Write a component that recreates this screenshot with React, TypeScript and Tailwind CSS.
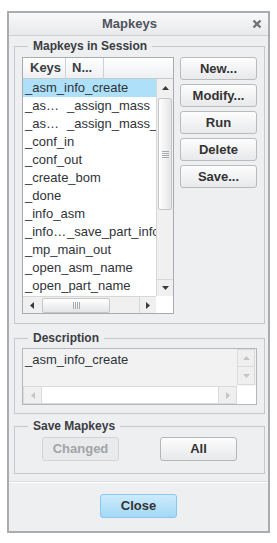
import type { ReactNode } from 'react';

type Row = { key: string; name?: string };

const ROWS: Row[] = [
  { key: '_asm_info_create' },
  { key: '_as…', name: '_assign_mass' },
  { key: '_as…', name: '_assign_mass_asm' },
  { key: '_conf_in' },
  { key: '_conf_out' },
  { key: '_create_bom' },
  { key: '_done' },
  { key: '_info_asm' },
  { key: '_info…', name: '_save_part_info' },
  { key: '_mp_main_out' },
  { key: '_open_asm_name' },
  { key: '_open_part_name' },
];

const ACTIONS = ['New...', 'Modify...', 'Run', 'Delete', 'Save...'];

function Arrow({ dir, color = '#3a3a3a' }: { dir: 'up' | 'down' | 'left' | 'right'; color?: string }) {
  const pts = {
    up: '0,5 3.5,1 7,5',
    down: '0,1 7,1 3.5,5',
    left: '5,0 5,7 1,3.5',
    right: '1,0 1,7 5,3.5',
  }[dir];
  const horiz = dir === 'left' || dir === 'right';
  return (
    <svg width={horiz ? 6 : 7} height={horiz ? 7 : 6} viewBox={horiz ? '0 0 6 7' : '0 0 7 6'}>
      <polygon points={pts} fill={color} />
    </svg>
  );
}

function Group({ label, className, children }: { label: string; className?: string; children: ReactNode }) {
  return (
    <fieldset className={`border border-[#c6c8cb] ${className ?? ''}`}>
      <legend className="ml-[13px] px-[5px] text-[12px] font-bold leading-[14px] text-[#3a3d42]">{label}</legend>
      {children}
    </fieldset>
  );
}

function PushButton({ children, disabled }: { children: ReactNode; disabled?: boolean }) {
  return (
    <button
      type="button"
      className={
        disabled
          ? 'h-[24px] w-[77px] rounded-[3px] border border-[#d2d3d5] bg-[#e9eaec] text-[13px] font-bold text-[#a2a4a7]'
          : 'h-[24px] w-[77px] rounded-[3px] border border-[#b4b6b9] bg-gradient-to-b from-[#fdfdfd] to-[#e7e8ea] text-[13px] font-bold text-[#333]'
      }
    >
      {children}
    </button>
  );
}

export default function App() {
  return (
    <div className="min-h-[543px] bg-white pl-[7px] pt-[11px] font-['Liberation_Sans',Arial,sans-serif] text-[#2f3338]">
      <div className="flex h-[522px] w-[263px] flex-col border-2 border-[#a9acb0] bg-[#eeeff1]">
        {/* Title bar */}
        <div className="flex h-[23px] shrink-0 items-center border-b border-[#cfd1d4] bg-gradient-to-b from-[#f9f9fa] to-[#e8e9eb]">
          <span className="flex-1 text-center text-[13px] font-bold text-[#4d535e]">Mapkeys</span>
          <span className="flex w-[18px] items-center justify-center pr-[4px]">
            <svg width="10" height="10" viewBox="0 0 10 10">
              <path d="M1.5 1.5 L8.5 8.5 M8.5 1.5 L1.5 8.5" stroke="#707378" strokeWidth="2.4" />
            </svg>
          </span>
        </div>

        <div className="flex flex-col pl-[5px] pr-[3px]">
          {/* Mapkeys in Session */}
          <Group label="Mapkeys in Session" className="mt-[3px]">
            <div className="flex gap-[6px] px-[7px] pb-[9px] pt-[4px]">
              <div className="flex w-[152px] flex-col border border-[#a9abae] bg-white">
                <div className="flex h-[21px] border-b border-[#c9cacc] bg-gradient-to-b from-white to-[#eef0f2] text-[13px] font-bold leading-[20px] text-[#3a3d42]">
                  <div className="w-[43px] border-r border-[#d0d1d3] pl-[7px]">Keys</div>
                  <div className="w-[38px] border-r border-[#d0d1d3] pl-[6px]">N...</div>
                  <div className="flex-1" />
                </div>
                <div className="flex h-[217px]">
                  <div className="w-[133px] overflow-hidden">
                    {ROWS.map((r, i) => (
                      <div
                        key={i}
                        className={`flex h-[18px] items-center whitespace-nowrap pl-[2px] text-[13px] ${i === 0 ? 'bg-[#aee0f9]' : ''}`}
                      >
                        {r.name ? (
                          <>
                            <span className="w-[42px] shrink-0">{r.key}</span>
                            <span>{r.name}</span>
                          </>
                        ) : (
                          <span>{r.key}</span>
                        )}
                      </div>
                    ))}
                  </div>
                  <div className="flex w-[17px] flex-col border-l border-[#d6d7d9] bg-[#f0f0f0]">
                    <div className="flex h-[17px] items-center justify-center">
                      <Arrow dir="up" />
                    </div>
                    <div className="flex-1 pt-[2px]">
                      <div className="mx-[1px] flex h-[112px] items-center justify-center rounded-[2px] border border-[#c5c6c8] bg-gradient-to-r from-white to-[#e4e5e7]">
                        <div className="flex w-[7px] flex-col gap-[1px]">
                          <div className="h-[1px] bg-[#a8aaad]" />
                          <div className="h-[1px] bg-[#a8aaad]" />
                          <div className="h-[1px] bg-[#a8aaad]" />
                          <div className="h-[1px] bg-[#a8aaad]" />
                        </div>
                      </div>
                    </div>
                    <div className="flex h-[17px] items-center justify-center border-t border-[#d6d7d9]">
                      <Arrow dir="down" />
                    </div>
                  </div>
                </div>
                <div className="flex h-[17px]">
                  <div className="flex w-[133px] border-t border-[#d6d7d9] bg-[#f0f0f0]">
                    <div className="flex w-[17px] items-center justify-center">
                      <Arrow dir="left" />
                    </div>
                    <div className="flex flex-1 items-center pl-[2px]">
                      <div className="flex h-[15px] w-[68px] items-center justify-center rounded-[2px] border border-[#c5c6c8] bg-gradient-to-b from-white to-[#e4e5e7]">
                        <div className="flex h-[7px] gap-[1px]">
                          <div className="w-[1px] bg-[#a8aaad]" />
                          <div className="w-[1px] bg-[#a8aaad]" />
                          <div className="w-[1px] bg-[#a8aaad]" />
                          <div className="w-[1px] bg-[#a8aaad]" />
                        </div>
                      </div>
                    </div>
                    <div className="flex w-[17px] items-center justify-center border-l border-[#d6d7d9]">
                      <Arrow dir="right" />
                    </div>
                  </div>
                  <div className="w-[17px] bg-white" />
                </div>
              </div>

              <div className="flex flex-col gap-[4px]">
                {ACTIONS.map((a) => (
                  <button
                    key={a}
                    type="button"
                    className="h-[23px] w-[77px] rounded-[3px] border border-[#b9bbbe] bg-gradient-to-b from-[#fdfdfd] to-[#e8e9eb] text-[13px] font-bold text-[#333]"
                  >
                    {a}
                  </button>
                ))}
              </div>
            </div>
          </Group>

          {/* Description */}
          <Group label="Description" className="mt-[7px]">
            <div className="px-[7px] pb-[8px] pt-[3px]">
              <div className="flex h-[57px] w-[235px] flex-col border border-[#b5b7ba] bg-white">
                <div className="flex h-[37px]">
                  <div className="flex-1 bg-[#f2f2f3] pl-[2px] pt-[2px] text-[13px] leading-[18px]">_asm_info_create</div>
                  <div className="flex w-[19px] flex-col bg-[#f2f2f3] pr-[1px]">
                    <div className="flex h-[18px] items-center justify-center border border-[#dadbdd] bg-[#efeff0]">
                      <Arrow dir="up" color="#c4c5c7" />
                    </div>
                    <div className="flex h-[18px] items-center justify-center border border-t-0 border-[#dadbdd] bg-[#efeff0]">
                      <Arrow dir="down" color="#c4c5c7" />
                    </div>
                  </div>
                </div>
                <div className="flex h-[18px]">
                  <div className="flex flex-1 border border-[#dadbdd]">
                    <div className="flex w-[17px] items-center justify-center bg-[#efeff0]">
                      <Arrow dir="left" color="#c4c5c7" />
                    </div>
                    <div className="flex-1 border-x border-[#dadbdd] bg-white" />
                    <div className="flex w-[17px] items-center justify-center bg-[#efeff0]">
                      <Arrow dir="right" color="#c4c5c7" />
                    </div>
                  </div>
                  <div className="w-[19px] bg-white" />
                </div>
              </div>
            </div>
          </Group>

          {/* Save Mapkeys */}
          <Group label="Save Mapkeys" className="mt-[5px]">
            <div className="flex gap-[41px] pb-[12px] pl-[27px] pt-[4px]">
              <PushButton disabled>Changed</PushButton>
              <PushButton>All</PushButton>
            </div>
          </Group>
        </div>

        <div className="mt-[7px] h-[2px] border-t border-[#dcdde0] bg-white" />

        <div className="flex justify-center pt-[11px]">
          <button
            type="button"
            className="h-[24px] w-[77px] rounded-[3px] border border-[#86c8ef] bg-gradient-to-b from-[#cdebfc] to-[#a3d8f6] text-[13px] font-bold text-[#333]"
          >
            Close
          </button>
        </div>
      </div>
    </div>
  );
}
